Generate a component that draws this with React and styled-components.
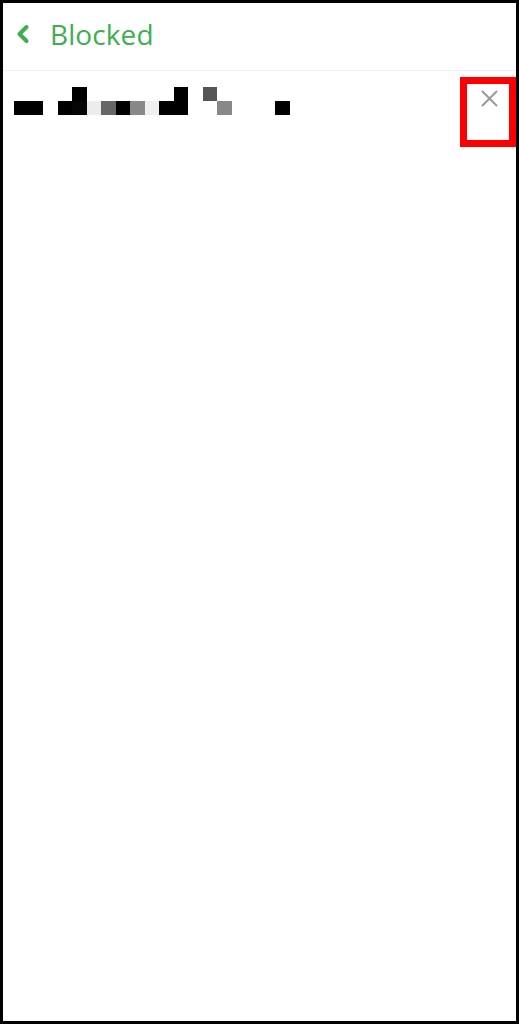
import styled, { createGlobalStyle } from "styled-components";

const GlobalStyle = createGlobalStyle`
  html, body {
    margin: 0;
    padding: 0;
    background: #fff;
  }
  * {
    box-sizing: border-box;
  }
`;

const Frame = styled.div`
  width: 519px;
  height: 1024px;
  border: 3px solid #000;
  background: #fff;
  display: flex;
  flex-direction: column;
  font-family: "Open Sans", "Liberation Sans", sans-serif;
`;

const Header = styled.div`
  height: 68px;
  display: flex;
  align-items: center;
  padding: 0 0 6px 13px;
  gap: 20px;
  border-bottom: 1px solid #f0f0f0;
`;

const BackButton = styled.button`
  border: none;
  background: none;
  padding: 0;
  display: flex;
  align-items: center;
  color: #3fae50;
  cursor: pointer;
`;

const Title = styled.h1`
  margin: 0;
  font-size: 28px;
  font-weight: 500;
  color: #3fae50;
  letter-spacing: 0.1px;
  line-height: 1;
`;

const Row = styled.div`
  display: flex;
  align-items: flex-start;
  justify-content: space-between;
  padding-left: 11px;
`;

const NameMosaic = styled.div`
  margin-top: 16px;
  display: flex;
`;

const RemoveButton = styled.button`
  position: relative;
  border: none;
  background: none;
  width: 56px;
  height: 70px;
  margin-top: 6px;
  padding: 13px 0 0 2px;
  display: flex;
  justify-content: center;
  align-items: flex-start;
  color: #999;
  cursor: pointer;
`;

const Highlight = styled.div`
  position: absolute;
  inset: 0;
  border: 7px solid #f00;
  pointer-events: none;
`;

const cells = [
  [0, 1, "#000"],
  [1, 1, "#000"],
  [3, 1, "#000"],
  [4, 1, "#050505"],
  [4, 0, "#000"],
  [5, 1, "#ececec"],
  [6, 1, "#666"],
  [7, 1, "#000"],
  [8, 1, "#888"],
  [9, 1, "#efefef"],
  [10, 1, "#000"],
  [11, 1, "#000"],
  [11, 0, "#000"],
  [13, 0, "#555"],
  [14, 1, "#888"],
  [18, 1, "#000"],
];

const Mosaic = () => (
  <svg width="280" height="28" viewBox="0 0 280 28" shapeRendering="crispEdges" aria-label="username">
    {cells.map(([c, r, fill], i) => {
      const x = Math.round(c * 14.5);
      const w = Math.round((c + 1) * 14.5) - x;
      return <rect key={i} x={x} y={r * 14} width={w} height="14" fill={fill} />;
    })}
  </svg>
);

export default function App() {
  return (
    <>
      <GlobalStyle />
      <Frame>
        <Header>
          <BackButton aria-label="Back">
            <svg width="14" height="20" viewBox="0 0 14 20">
              <path
                d="M10.5 3 L3.5 10 L10.5 17"
                fill="none"
                stroke="currentColor"
                strokeWidth="4"
                strokeLinecap="round"
                strokeLinejoin="round"
              />
            </svg>
          </BackButton>
          <Title>Blocked</Title>
        </Header>
        <Row>
          <NameMosaic>
            <Mosaic />
          </NameMosaic>
          <RemoveButton aria-label="Unblock">
            <svg width="17" height="17" viewBox="0 0 17 17">
              <path
                d="M1.5 1.5 L15.5 15.5 M15.5 1.5 L1.5 15.5"
                stroke="currentColor"
                strokeWidth="2"
                strokeLinecap="round"
              />
            </svg>
            <Highlight />
          </RemoveButton>
        </Row>
      </Frame>
    </>
  );
}
